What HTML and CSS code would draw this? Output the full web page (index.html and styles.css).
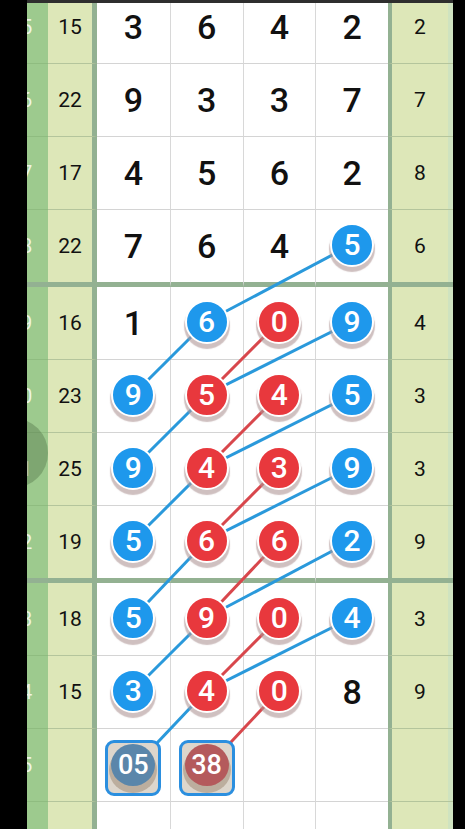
FILE: index.html
```html
<!DOCTYPE html>
<html lang="en">
<head>
<meta charset="UTF-8">
<title>Trend Chart</title>
<link rel="stylesheet" href="styles.css">
</head>
<body>
<div class="screen">
  <div class="edge-left"></div>
  <div class="chart">
    <div class="float-ball"></div>
    <div class="rows" id="rows">
      <svg class="links" id="links"></svg>

      <div class="row">
        <div class="issue"><span>5</span></div>
        <div class="sum">15</div>
        <div class="cell">3</div>
        <div class="cell">6</div>
        <div class="cell">4</div>
        <div class="cell">2</div>
        <div class="tail">2</div>
        <div class="strip"></div>
      </div>

      <div class="row">
        <div class="issue"><span>6</span></div>
        <div class="sum">22</div>
        <div class="cell">9</div>
        <div class="cell">3</div>
        <div class="cell">3</div>
        <div class="cell">7</div>
        <div class="tail">7</div>
        <div class="strip"></div>
      </div>

      <div class="row">
        <div class="issue"><span>7</span></div>
        <div class="sum">17</div>
        <div class="cell">4</div>
        <div class="cell">5</div>
        <div class="cell">6</div>
        <div class="cell">2</div>
        <div class="tail">8</div>
        <div class="strip"></div>
      </div>

      <div class="row end">
        <div class="issue"><span>8</span></div>
        <div class="sum">22</div>
        <div class="cell">7</div>
        <div class="cell">6</div>
        <div class="cell">4</div>
        <div class="cell"><div class="ball blue" id="r4c4">5</div></div>
        <div class="tail">6</div>
        <div class="strip"></div>
      </div>

      <div class="row">
        <div class="issue"><span>9</span></div>
        <div class="sum">16</div>
        <div class="cell">1</div>
        <div class="cell"><div class="ball blue" id="r5c2">6</div></div>
        <div class="cell"><div class="ball red" id="r5c3">0</div></div>
        <div class="cell"><div class="ball blue" id="r5c4">9</div></div>
        <div class="tail">4</div>
        <div class="strip"></div>
      </div>

      <div class="row">
        <div class="issue"><span>0</span></div>
        <div class="sum">23</div>
        <div class="cell"><div class="ball blue" id="r6c1">9</div></div>
        <div class="cell"><div class="ball red" id="r6c2">5</div></div>
        <div class="cell"><div class="ball red" id="r6c3">4</div></div>
        <div class="cell"><div class="ball blue" id="r6c4">5</div></div>
        <div class="tail">3</div>
        <div class="strip"></div>
      </div>

      <div class="row">
        <div class="issue"><span>1</span></div>
        <div class="sum">25</div>
        <div class="cell"><div class="ball blue" id="r7c1">9</div></div>
        <div class="cell"><div class="ball red" id="r7c2">4</div></div>
        <div class="cell"><div class="ball red" id="r7c3">3</div></div>
        <div class="cell"><div class="ball blue" id="r7c4">9</div></div>
        <div class="tail">3</div>
        <div class="strip"></div>
      </div>

      <div class="row end">
        <div class="issue"><span>2</span></div>
        <div class="sum">19</div>
        <div class="cell"><div class="ball blue" id="r8c1">5</div></div>
        <div class="cell"><div class="ball red" id="r8c2">6</div></div>
        <div class="cell"><div class="ball red" id="r8c3">6</div></div>
        <div class="cell"><div class="ball blue" id="r8c4">2</div></div>
        <div class="tail">9</div>
        <div class="strip"></div>
      </div>

      <div class="row">
        <div class="issue"><span>3</span></div>
        <div class="sum">18</div>
        <div class="cell"><div class="ball blue" id="r9c1">5</div></div>
        <div class="cell"><div class="ball red" id="r9c2">9</div></div>
        <div class="cell"><div class="ball red" id="r9c3">0</div></div>
        <div class="cell"><div class="ball blue" id="r9c4">4</div></div>
        <div class="tail">3</div>
        <div class="strip"></div>
      </div>

      <div class="row">
        <div class="issue"><span>4</span></div>
        <div class="sum">15</div>
        <div class="cell"><div class="ball blue" id="r10c1">3</div></div>
        <div class="cell"><div class="ball red" id="r10c2">4</div></div>
        <div class="cell"><div class="ball red" id="r10c3">0</div></div>
        <div class="cell">8</div>
        <div class="tail">9</div>
        <div class="strip"></div>
      </div>

      <div class="row">
        <div class="issue"><span>5</span></div>
        <div class="sum"></div>
        <div class="cell"><div class="pick" id="r11c1"><span class="pick-ball cool">05</span></div></div>
        <div class="cell"><div class="pick" id="r11c2"><span class="pick-ball warm">38</span></div></div>
        <div class="cell"></div>
        <div class="cell"></div>
        <div class="tail"></div>
        <div class="strip"></div>
      </div>

      <div class="row">
        <div class="issue"><span>6</span></div>
        <div class="sum"></div>
        <div class="cell"></div>
        <div class="cell"></div>
        <div class="cell"></div>
        <div class="cell"></div>
        <div class="tail"></div>
        <div class="strip"></div>
      </div>
    </div>
  </div>
  <div class="edge-right"></div>
</div>

<script>
const links = [
  ['r4c4', 'r5c2', 'blue'],
  ['r5c2', 'r6c1', 'blue'],
  ['r5c3', 'r6c2', 'red'],
  ['r5c4', 'r6c2', 'blue'],
  ['r6c2', 'r7c1', 'blue'],
  ['r6c3', 'r7c2', 'red'],
  ['r6c4', 'r7c2', 'blue'],
  ['r7c2', 'r8c1', 'blue'],
  ['r7c3', 'r8c2', 'red'],
  ['r7c4', 'r8c2', 'blue'],
  ['r8c2', 'r9c1', 'blue'],
  ['r8c3', 'r9c2', 'red'],
  ['r8c4', 'r9c2', 'blue'],
  ['r9c2', 'r10c1', 'blue'],
  ['r9c3', 'r10c2', 'red'],
  ['r9c4', 'r10c2', 'blue'],
  ['r10c2', 'r11c1', 'blue'],
  ['r10c3', 'r11c2', 'red']
];

function drawLinks() {
  const rows = document.getElementById('rows');
  const svg = document.getElementById('links');
  const base = rows.getBoundingClientRect();
  svg.setAttribute('width', base.width);
  svg.setAttribute('height', base.height);

  function center(id) {
    const r = document.getElementById(id).getBoundingClientRect();
    return [r.left + r.width / 2 - base.left, r.top + r.height / 2 - base.top];
  }

  links.forEach(function(link) {
    const a = center(link[0]);
    const b = center(link[1]);
    const line = document.createElementNS('http://www.w3.org/2000/svg', 'line');
    line.setAttribute('x1', a[0]);
    line.setAttribute('y1', a[1]);
    line.setAttribute('x2', b[0]);
    line.setAttribute('y2', b[1]);
    line.setAttribute('class', 'link-' + link[2]);
    svg.appendChild(line);
  });
}

drawLinks();
</script>
</body>
</html>
```

FILE: styles.css
```css
body {
  margin: 0;
  background: #000;
  font-family: Roboto, "Noto Sans", sans-serif;
  overflow: hidden;
}
.screen {
  display: flex;
  height: 829px;
  overflow: hidden;
}
.edge-left { width: 27px; flex: none; background: #000; }
.edge-right { flex: 1; background: #000; }

.chart {
  position: relative;
  width: 426px;
  flex: none;
  border-top: 3px solid #2e2e2e;
  overflow: hidden;
}
.float-ball {
  position: absolute;
  left: -49px;
  top: 415px;
  width: 70px;
  height: 70px;
  border-radius: 50%;
  background: rgba(70, 100, 60, 0.35);
  z-index: 3;
}

.rows {
  position: relative;
  margin-top: -12px;
}
.links {
  position: absolute;
  left: 0;
  top: 0;
  z-index: 1;
}
.link-blue { stroke: #2a99db; stroke-width: 3; }
.link-red { stroke: #d8474c; stroke-width: 3; }

.row {
  display: grid;
  grid-template-columns: 21px 49px repeat(4, 1fr) 60px 5px;
  height: 73px;
}
.row.end { height: 77px; }
.row > div {
  box-sizing: border-box;
  display: flex;
  align-items: center;
  justify-content: center;
  border-bottom: 1px solid #d4d4d4;
}
.row.end > div { border-bottom: 5px solid #93b192; }

.issue {
  background: #9dca8e;
  justify-content: flex-start !important;
  overflow: hidden;
  color: #eef6e8;
  font-size: 20px;
}
.row > .issue { border-bottom-color: #8fbc80; }
.issue span { margin-left: -6px; }

.sum {
  background: #dde7b8;
  border-right: 5px solid #93b192;
  font-size: 21px;
  color: #111;
}
.row > .sum { border-bottom-color: #b4c59c; }

.cell {
  background: #fff;
  font-size: 34px;
  font-weight: 500;
  color: #111;
}
.cell + .cell { border-left: 1px solid #d8d8d8; }

.tail {
  background: #dde7b8;
  border-left: 4px solid #93b192;
  font-size: 21px;
  color: #111;
}
.row > .tail { border-bottom-color: #b4c59c; }
.strip { background: #cfe3c0; }
.row > .strip { border-bottom-color: #b4c59c; }

.ball {
  position: relative;
  z-index: 2;
  width: 40px;
  height: 40px;
  margin-top: -3px;
  border: 2px solid #fff;
  border-radius: 50%;
  display: flex;
  align-items: center;
  justify-content: center;
  color: #fff;
  font-size: 30px;
  box-shadow: 0 4px 1px 1px rgba(175, 150, 150, 0.6);
}
.ball.blue { background: #1e98ec; }
.ball.red { background: #e8383d; }

.pick {
  position: relative;
  z-index: 2;
  width: 50px;
  height: 50px;
  margin-top: 6px;
  border: 3px solid #2b8fdf;
  border-radius: 9px;
  background: #ddd6cc;
  display: flex;
  align-items: flex-start;
  justify-content: center;
  overflow: hidden;
}
.pick-ball {
  width: 44px;
  height: 42px;
  margin-top: 1px;
  border-radius: 50%;
  display: flex;
  align-items: center;
  justify-content: center;
  color: #fff;
  font-size: 27px;
  box-shadow: 0 5px 0 2px #bcae9e;
}
.pick-ball.cool { background: #5a86aa; }
.pick-ball.warm { background: #b45a5c; }
```
